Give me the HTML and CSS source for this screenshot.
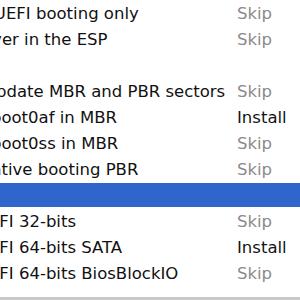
FILE: index.html
```html
<!DOCTYPE html>
<html lang="en">
<head>
    <meta charset="UTF-8">
    <title>Clover - Customize</title>
    <link rel="stylesheet" href="styles.css">
</head>
<body>
    <div class="list">
        <div class="row lvl1"><span class="name">Install for UEFI booting only</span><span class="action">Skip</span></div>
        <div class="row lvl1"><span class="name">Install Clover in the ESP</span><span class="action">Skip</span></div>
        <!-- group: Bootloader (name is off the left edge) -->
        <div class="row group"><span class="name"></span><span class="action"></span></div>
        <div class="row lvl2"><span class="name">Don't update MBR and PBR sectors</span><span class="action">Skip</span></div>
        <div class="row lvl2"><span class="name">Install boot0af in MBR</span><span class="action on">Install</span></div>
        <div class="row lvl2"><span class="name">Install boot0ss in MBR</span><span class="action">Skip</span></div>
        <div class="row lvl2"><span class="name">Alternative booting PBR</span><span class="action">Skip</span></div>
        <!-- group: CloverEFI, selected -->
        <div class="row group selected"><span class="name"></span><span class="action"></span></div>
        <div class="row lvl2"><span class="name">CloverEFI 32-bits</span><span class="action">Skip</span></div>
        <div class="row lvl2"><span class="name">CloverEFI 64-bits SATA</span><span class="action on">Install</span></div>
        <div class="row lvl2"><span class="name">CloverEFI 64-bits BiosBlockIO</span><span class="action">Skip</span></div>
    </div>
    <div class="bottom"></div>
</body>
</html>
```

FILE: styles.css
```css
html, body { margin: 0; padding: 0; background: #fff; overflow: hidden; }
body { width: 300px; height: 300px; display: flex; flex-direction: column; font-family: 'DejaVu Sans', 'Liberation Sans', sans-serif; font-size: 16.5px; color: #111; }
.list { flex: 1; display: flex; flex-direction: column; margin-left: -112px; }
.row { display: flex; align-items: center; height: 26px; padding-top: 1px; box-sizing: border-box; white-space: nowrap; }
.name { flex: none; width: 349px; box-sizing: border-box; overflow: hidden; }
.lvl1 .name { padding-left: 23px; }
.lvl2 .name { padding-left: 48px; }
.lvl2:nth-child(7) .name { padding-left: 54px; }
.action { flex: none; width: 63px; color: #8a8a8a; }
.action.on { color: #141414; }
.selected { background: #3066cc; border-top: 1px solid #fff; border-bottom: 1px solid #fff; }
.bottom { height: 3px; background: #c8c8c8; }
```
